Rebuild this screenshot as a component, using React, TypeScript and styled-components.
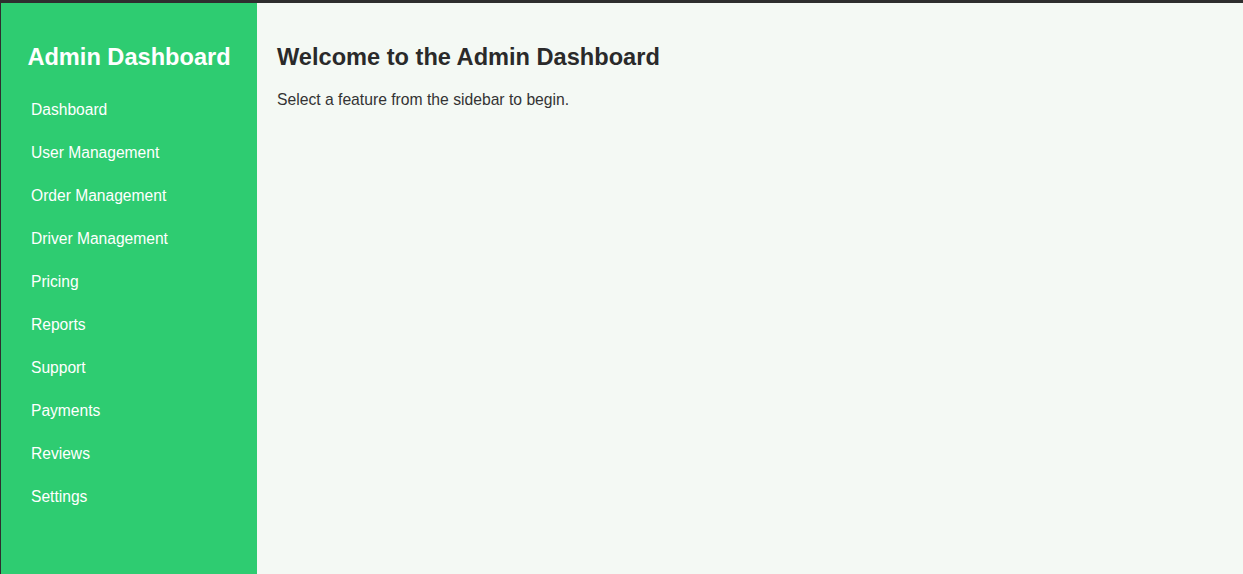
import React from 'react';
import styled, { createGlobalStyle } from 'styled-components';

const GlobalStyle = createGlobalStyle`
  html, body {
    margin: 0;
    padding: 0;
    height: 100%;
  }
  body {
    font-family: "Liberation Sans", Arial, sans-serif;
    background: #2e2e2e;
  }
  #root {
    height: 100%;
  }
`;

const Layout = styled.div`
  display: flex;
  box-sizing: border-box;
  height: 100vh;
  border-top: 3px solid #2e2e2e;
  border-left: 1px solid #2e2e2e;
`;

const Sidebar = styled.aside`
  width: 256px;
  flex-shrink: 0;
  box-sizing: border-box;
  padding: 20px;
  background-color: #2ecc71;
  color: #ffffff;
`;

const Brand = styled.h2`
  margin: 21px 0 19px;
  font-size: 23.6px;
  line-height: 27.6px;
  font-weight: bold;
  text-align: center;
  white-space: nowrap;
`;

const NavList = styled.ul`
  list-style: none;
  margin: 0;
  padding: 0;
`;

const NavItem = styled.li`
  margin-bottom: 5px;
`;

const NavLink = styled.a`
  display: block;
  padding: 10px;
  font-size: 15.6px;
  line-height: 18px;
  color: #ffffff;
  text-decoration: none;
  border-radius: 4px;
  cursor: pointer;

  &:hover {
    background-color: rgba(0, 0, 0, 0.08);
  }
`;

const Main = styled.main`
  flex: 1;
  box-sizing: border-box;
  padding: 20px;
  background-color: #f4f9f4;
  color: #333333;
`;

const Heading = styled.h2`
  margin: 21px 0 19px;
  font-size: 23.6px;
  line-height: 27.6px;
  font-weight: bold;
  color: #2a2a2a;
`;

const Lead = styled.p`
  margin: 16px 0;
  font-size: 15.7px;
  line-height: 18px;
  color: #333333;
`;

const links = [
  'Dashboard',
  'User Management',
  'Order Management',
  'Driver Management',
  'Pricing',
  'Reports',
  'Support',
  'Payments',
  'Reviews',
  'Settings',
];

export default function App() {
  return (
    <>
      <GlobalStyle />
      <Layout>
        <Sidebar>
          <Brand>Admin Dashboard</Brand>
          <NavList>
            {links.map(label => (
              <NavItem key={label}>
                <NavLink>{label}</NavLink>
              </NavItem>
            ))}
          </NavList>
        </Sidebar>
        <Main>
          <Heading>Welcome to the Admin Dashboard</Heading>
          <Lead>Select a feature from the sidebar to begin.</Lead>
        </Main>
      </Layout>
    </>
  );
}
